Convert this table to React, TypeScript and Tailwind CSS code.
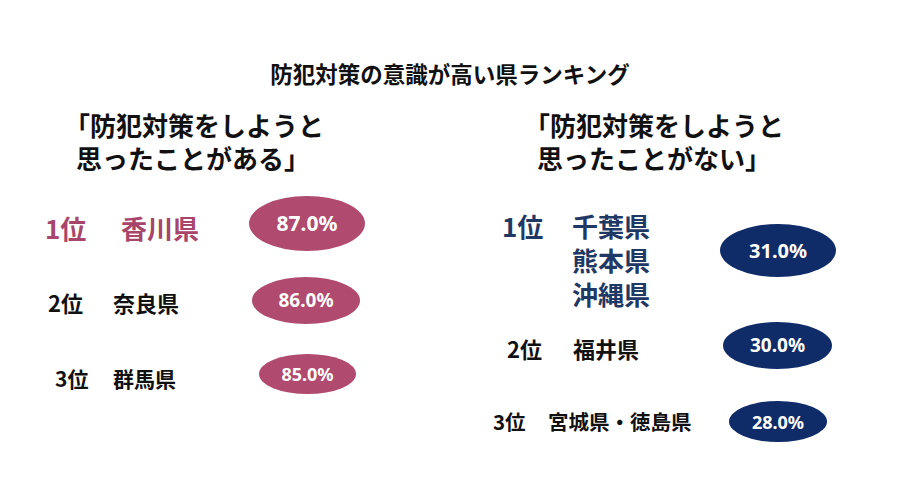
import React from "react";

const PINK = "bg-[#b04a6e]";
const NAVY = "bg-[#0f2b68]";

function Ellipse({ w, h, bg, size, label }: { w: string; h: string; bg: string; size: string; label: string }) {
  return (
    <div className={`${w} ${h} ${bg} shrink-0 rounded-[50%] flex items-center justify-center`}>
      <span className={`${size} font-bold text-white leading-none font-['Noto_Sans',sans-serif]`}>{label}</span>
    </div>
  );
}

export default function App() {
  return (
    <div className="w-[900px] h-[500px] bg-white overflow-hidden font-['Noto_Sans_CJK_JP',sans-serif] text-[#111]">
      <div className="pt-[57px] text-center text-[22.5px] leading-[33px] font-bold">防犯対策の意識が高い県ランキング</div>
      <div className="flex mt-[18px]">
        {/* left */}
        <div className="w-[460px] shrink-0">
          <div className="text-[26px] leading-[33px] font-bold">
            <div className="pl-[64px]">「防犯対策をしようと</div>
            <div className="pl-[76px]">思ったことがある」</div>
          </div>
          {/* row 1 */}
          <div className="flex items-center mt-[22px] h-[55px]">
            <div className="flex items-center pt-[9px] text-[#a8456a] font-bold text-[26px] leading-none">
              <span className="pl-[45px] w-[121px]">1位</span>
              <span className="w-[128px]">香川県</span>
            </div>
            <Ellipse w="w-[116px]" h="h-[55px]" bg={PINK} size="text-[21px]" label="87.0%" />
          </div>
          {/* row 2 */}
          <div className="flex items-center mt-[26px] h-[47px]">
            <div className="flex items-center pt-[2px] font-bold text-[22px] leading-none">
              <span className="pl-[48px] w-[113px]">2位</span>
              <span className="w-[139px]">奈良県</span>
            </div>
            <Ellipse w="w-[108px]" h="h-[47px]" bg={PINK} size="text-[19px]" label="86.0%" />
          </div>
          {/* row 3 */}
          <div className="flex items-center mt-[30px] h-[40px]">
            <div className="flex items-center pt-[8px] font-bold text-[21px] leading-none">
              <span className="pl-[55px] w-[113px]">3位</span>
              <span className="w-[146px]">群馬県</span>
            </div>
            <Ellipse w="w-[97px]" h="h-[40px]" bg={PINK} size="text-[18px]" label="85.0%" />
          </div>
        </div>
        {/* right */}
        <div className="flex-1">
          <div className="text-[26px] leading-[33px] font-bold">
            <div className="pl-[64px]">「防犯対策をしようと</div>
            <div className="pl-[77px]">思ったことがない」</div>
          </div>
          {/* row 1 */}
          <div className="flex items-start mt-[35px]">
            <div className="flex items-start text-[#1f3864] font-bold text-[26px] leading-[34px]">
              <span className="pl-[42px] w-[112px]">1位</span>
              <div className="w-[148px] flex flex-col">
                <span>千葉県</span>
                <span>熊本県</span>
                <span>沖縄県</span>
              </div>
            </div>
            <div className="mt-[15px]">
              <Ellipse w="w-[116px]" h="h-[53px]" bg={NAVY} size="text-[20px]" label="31.0%" />
            </div>
          </div>
          {/* row 2 */}
          <div className="flex items-center mt-[11px] h-[47px]">
            <div className="flex items-center pt-[5px] font-bold text-[22px] leading-none">
              <span className="pl-[47px] w-[113px]">2位</span>
              <span className="w-[150px]">福井県</span>
            </div>
            <Ellipse w="w-[109px]" h="h-[47px]" bg={NAVY} size="text-[19px]" label="30.0%" />
          </div>
          {/* row 3 */}
          <div className="flex items-center mt-[32px] h-[41px]">
            <div className="flex items-center font-bold text-[20.5px] leading-none">
              <span className="pl-[33px] w-[88px]">3位</span>
              <span className="w-[181px] whitespace-nowrap">宮城県・徳島県</span>
            </div>
            <Ellipse w="w-[98px]" h="h-[41px]" bg={NAVY} size="text-[18px]" label="28.0%" />
          </div>
        </div>
      </div>
    </div>
  );
}
